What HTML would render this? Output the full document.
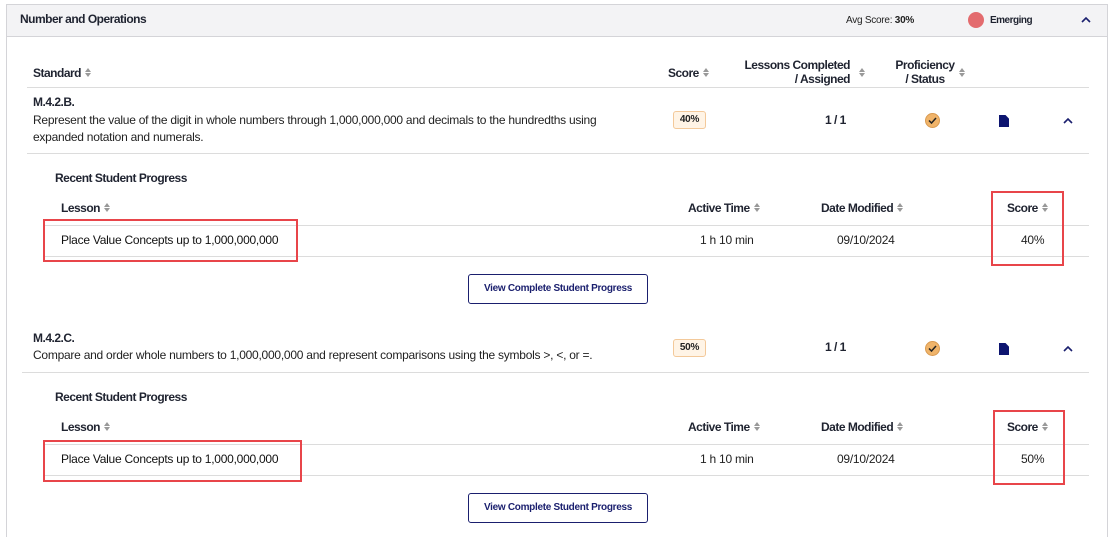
<!DOCTYPE html>
<html><head><meta charset="utf-8"><style>
*{margin:0;padding:0;box-sizing:border-box}
html,body{width:1115px;height:537px;overflow:hidden}
body{background:#fff;font-family:"Liberation Sans",Arial,sans-serif;color:#222;font-size:12px;position:relative;letter-spacing:-0.25px}
.a{position:absolute;white-space:nowrap;line-height:14px}
.b{font-weight:bold;color:#1f2330;letter-spacing:-0.5px}
.s{display:inline-block;width:7px;height:10px;vertical-align:-1px;margin-left:4px;position:relative}
.s:before{content:"";position:absolute;left:0;top:0;border-left:3.5px solid transparent;border-right:3.5px solid transparent;border-bottom:4px solid #999}
.s:after{content:"";position:absolute;left:0;top:5px;border-left:3.5px solid transparent;border-right:3.5px solid transparent;border-top:4px solid #999}
.ln{position:absolute;height:1px;background:#dcdcdc}
.rb{position:absolute;border:2px solid #e8454a}
.badge{position:absolute;width:33px;height:18px;border:1px solid #f3c99a;background:#fff4e6;border-radius:3px;font-size:10px;font-weight:bold;text-align:center;line-height:16px;color:#222}
.btn{position:absolute;width:180px;height:30px;border:1px solid #1a1f6e;border-radius:3px;color:#1a1f6e;font-size:10px;font-weight:bold;text-align:center;line-height:28px;letter-spacing:-0.3px}
.chk{position:absolute;width:15px;height:15px;border-radius:50%;background:#f0b46a;border:1px solid #d99a50}
.doc{position:absolute;width:10px;height:12px;background:#0d1570;clip-path:polygon(0 0,65% 0,100% 30%,100% 100%,0 100%)}
</style></head><body>
<div style="position:absolute;left:6px;top:4px;width:1102px;height:533px;border:1px solid #d4d4d8;border-bottom:none"></div>
<div style="position:absolute;left:7px;top:5px;width:1100px;height:32px;background:#f3f3f5;border-bottom:1px solid #d4d4d8"></div>
<div class="a b" style="left:20px;top:12px">Number and Operations</div>
<div class="a" style="left:846px;top:14px;font-size:10px">Avg Score: <b>30%</b></div>
<div style="position:absolute;left:968px;top:12px;width:16px;height:16px;border-radius:50%;background:#e36b6e"></div>
<div class="a b" style="left:990px;top:14px;font-size:10px">Emerging</div>
<svg style="position:absolute;left:1081px;top:16px" width="10" height="7"><path d="M1 6L5 2L9 6" stroke="#1a1f6e" stroke-width="1.6" fill="none"/></svg>

<div class="a b" style="left:33px;top:66px">Standard<span class="s"></span></div>
<div class="a b" style="left:668px;top:66px">Score<span class="s"></span></div>
<div class="a b" style="right:265px;top:58px;text-align:right">Lessons Completed<br>/ Assigned</div>
<div class="a" style="left:855px;top:66px"><span class="s"></span></div>
<div class="a b" style="left:885px;top:58px;width:80px;text-align:center">Proficiency<br>/ Status</div>
<div class="a" style="left:955px;top:66px"><span class="s"></span></div>
<div class="ln" style="left:27px;top:87px;width:1062px"></div>

<div class="a b" style="left:33px;top:95px">M.4.2.B.</div>
<div class="a" style="left:33px;top:112px;line-height:17px">Represent the value of the digit in whole numbers through 1,000,000,000 and decimals to the hundredths using<br>expanded notation and numerals.</div>
<div class="badge" style="left:673px;top:111px">40%</div>
<div class="a b" style="left:825px;top:113px">1 / 1</div>
<div class="chk" style="left:925px;top:113px"></div>
<svg style="position:absolute;left:925px;top:113px" width="15" height="15"><path d="M4 7.5L6.5 10L11 5" stroke="#222" stroke-width="1.5" fill="none"/></svg>
<div class="doc" style="left:999px;top:115px"></div>
<svg style="position:absolute;left:1063px;top:117px" width="10" height="7"><path d="M1 6L5 2L9 6" stroke="#1a1f6e" stroke-width="1.6" fill="none"/></svg>
<div class="ln" style="left:27px;top:153px;width:1062px"></div>
<div class="a b" style="left:55px;top:171px">Recent Student Progress</div>
<div class="a b" style="left:61px;top:201px">Lesson<span class="s"></span></div>
<div class="a b" style="left:688px;top:201px">Active Time<span class="s"></span></div>
<div class="a b" style="left:821px;top:201px">Date Modified<span class="s"></span></div>
<div class="a b" style="left:1007px;top:201px">Score<span class="s"></span></div>
<div class="ln" style="left:45px;top:225px;width:1044px"></div>
<div class="a" style="left:61px;top:233px;color:#111">Place Value Concepts up to 1,000,000,000</div>
<div class="a" style="left:700px;top:233px">1 h 10 min</div>
<div class="a" style="left:837px;top:233px">09/10/2024</div>
<div class="a" style="left:1021px;top:233px">40%</div>
<div class="ln" style="left:45px;top:256px;width:1044px"></div>
<div class="rb" style="left:43px;top:219px;width:255px;height:43px"></div>
<div class="rb" style="left:991px;top:191px;width:73px;height:75px"></div>
<div class="btn" style="left:468px;top:274px">View Complete Student Progress</div>

<div class="a b" style="left:33px;top:331px">M.4.2.C.</div>
<div class="a" style="left:33px;top:348px">Compare and order whole numbers to 1,000,000,000 and represent comparisons using the symbols &gt;, &lt;, or =.</div>
<div class="badge" style="left:673px;top:339px">50%</div>
<div class="a b" style="left:825px;top:340px">1 / 1</div>
<div class="chk" style="left:925px;top:341px"></div>
<svg style="position:absolute;left:925px;top:341px" width="15" height="15"><path d="M4 7.5L6.5 10L11 5" stroke="#222" stroke-width="1.5" fill="none"/></svg>
<div class="doc" style="left:999px;top:343px"></div>
<svg style="position:absolute;left:1063px;top:345px" width="10" height="7"><path d="M1 6L5 2L9 6" stroke="#1a1f6e" stroke-width="1.6" fill="none"/></svg>
<div class="ln" style="left:22px;top:372px;width:1067px"></div>
<div class="a b" style="left:55px;top:390px">Recent Student Progress</div>
<div class="a b" style="left:61px;top:420px">Lesson<span class="s"></span></div>
<div class="a b" style="left:688px;top:420px">Active Time<span class="s"></span></div>
<div class="a b" style="left:821px;top:420px">Date Modified<span class="s"></span></div>
<div class="a b" style="left:1007px;top:420px">Score<span class="s"></span></div>
<div class="ln" style="left:45px;top:444px;width:1044px"></div>
<div class="a" style="left:61px;top:452px;color:#111">Place Value Concepts up to 1,000,000,000</div>
<div class="a" style="left:700px;top:452px">1 h 10 min</div>
<div class="a" style="left:837px;top:452px">09/10/2024</div>
<div class="a" style="left:1021px;top:452px">50%</div>
<div class="ln" style="left:45px;top:475px;width:1044px"></div>
<div class="rb" style="left:43px;top:440px;width:259px;height:42px"></div>
<div class="rb" style="left:993px;top:410px;width:72px;height:75px"></div>
<div class="btn" style="left:468px;top:493px">View Complete Student Progress</div>
</body></html>
